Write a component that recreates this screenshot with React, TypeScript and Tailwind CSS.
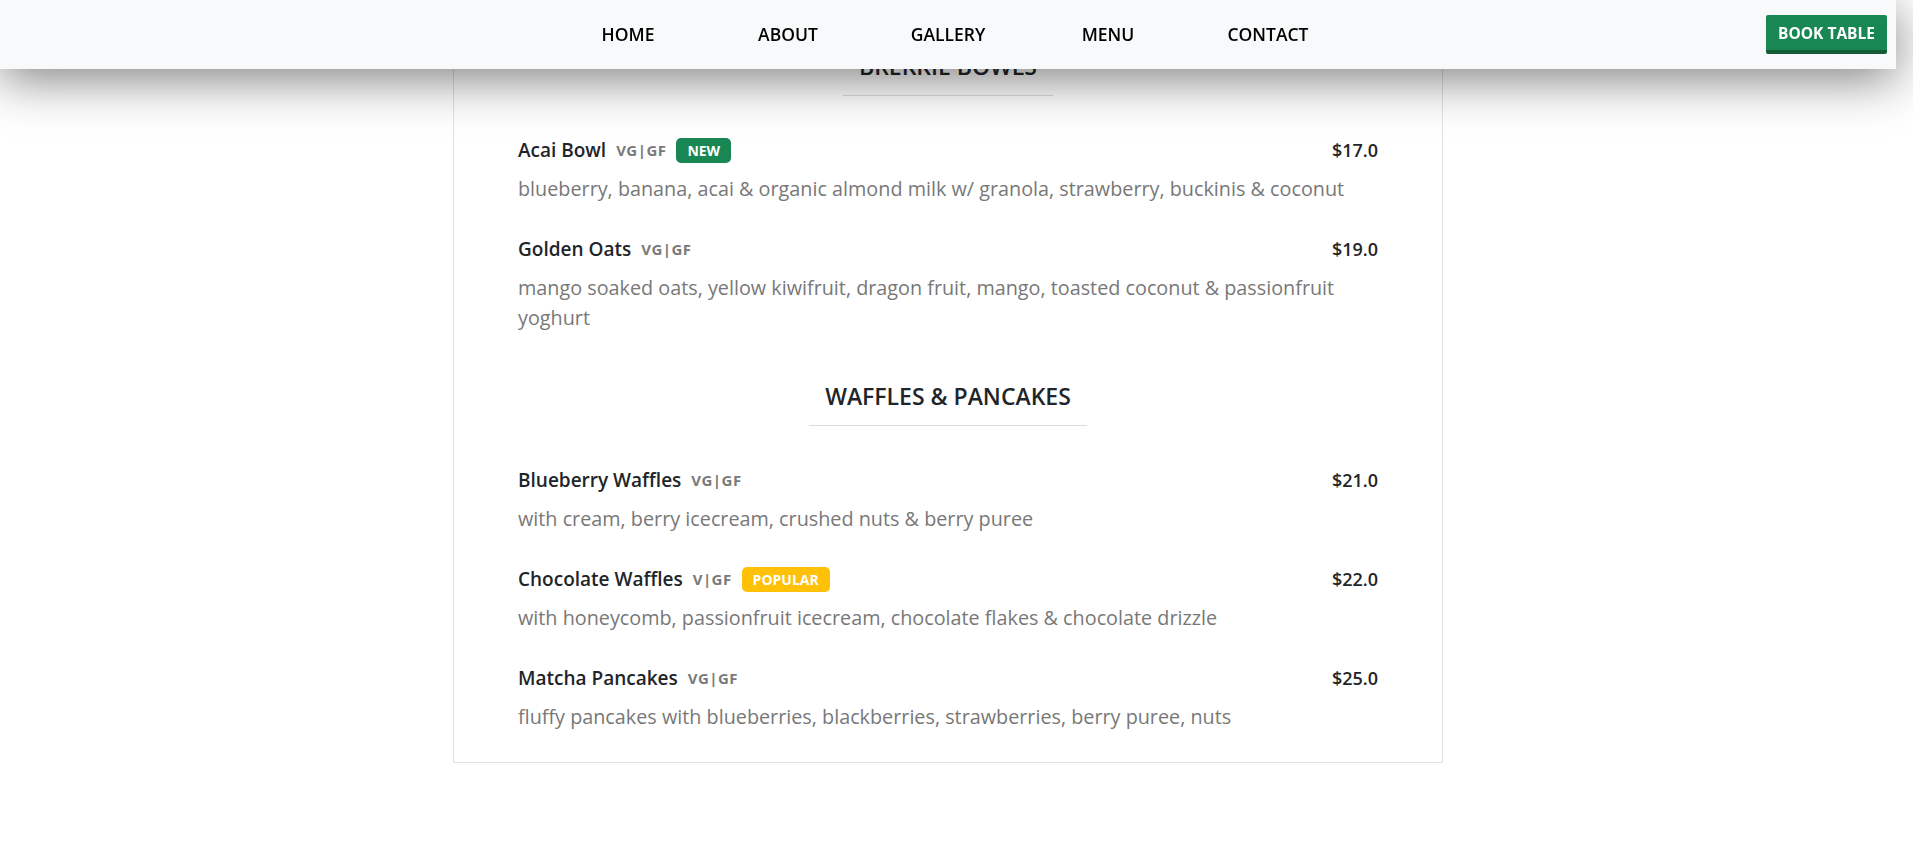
import { useLayoutEffect, useRef } from "react";

type Badge = { label: string; tone: "green" | "yellow" };

interface MenuItem {
  name: string;
  tags: string;
  price: string;
  description: string;
  badge?: Badge;
}

interface MenuSection {
  title: string;
  items: MenuItem[];
}

const NAV_LINKS = ["HOME", "ABOUT", "GALLERY", "MENU", "CONTACT"];

const SECTIONS: MenuSection[] = [
  {
    title: "Brekkie Bowls",
    items: [
      {
        name: "Acai Bowl",
        tags: "VG|GF",
        price: "$17.0",
        badge: { label: "NEW", tone: "green" },
        description:
          "blueberry, banana, acai & organic almond milk w/ granola, strawberry, buckinis & coconut",
      },
      {
        name: "Golden Oats",
        tags: "VG|GF",
        price: "$19.0",
        description:
          "mango soaked oats, yellow kiwifruit, dragon fruit, mango, toasted coconut & passionfruit yoghurt",
      },
    ],
  },
  {
    title: "Waffles & Pancakes",
    items: [
      {
        name: "Blueberry Waffles",
        tags: "VG|GF",
        price: "$21.0",
        description: "with cream, berry icecream, crushed nuts & berry puree",
      },
      {
        name: "Chocolate Waffles",
        tags: "V|GF",
        price: "$22.0",
        badge: { label: "POPULAR", tone: "yellow" },
        description:
          "with honeycomb, passionfruit icecream, chocolate flakes & chocolate drizzle",
      },
      {
        name: "Matcha Pancakes",
        tags: "VG|GF",
        price: "$25.0",
        description:
          "fluffy pancakes with blueberries, blackberries, strawberries, berry puree, nuts",
      },
    ],
  },
];

const ABOVE_HEIGHT = 6205;
const SCROLL_TOP = ABOVE_HEIGHT + 65;

function Navbar() {
  return (
    <header className="sticky top-0 z-20 grid h-[69px] grid-cols-[1fr_auto_1fr] items-center bg-[#f8f9fa] shadow-[0_10px_50px_rgba(0,0,0,0.5)]">
      <div />
      <nav className="flex">
        {NAV_LINKS.map((link) => (
          <a
            key={link}
            href="#"
            className="w-40 text-center text-[17.5px] font-semibold text-black"
          >
            {link}
          </a>
        ))}
      </nav>
      <div className="flex justify-end pr-[9px]">
        <button className="h-[39px] w-[121px] rounded-[2px] border-b-4 border-[#145c36] bg-[#198754] pt-[3px] text-[15.5px] font-bold text-white">
          BOOK TABLE
        </button>
      </div>
    </header>
  );
}

function Tag({ badge }: { badge: Badge }) {
  const tone = badge.tone === "green" ? "bg-[#198754]" : "bg-[#ffc107]";
  return (
    <span
      className={`ml-[10px] h-[25px] rounded-[5px] px-[11px] text-[14px] leading-[25px] font-bold text-white ${tone}`}
    >
      {badge.label}
    </span>
  );
}

function Item({ item }: { item: MenuItem }) {
  return (
    <div>
      <div className="flex h-6 items-center justify-between">
        <div className="flex items-center">
          <span className="text-[19px] font-semibold text-[#212529]">{item.name}</span>
          <span className="ml-[10px] text-[15px] font-bold tracking-[0.03em] text-[#7a7a7a]">
            {item.tags}
          </span>
          {item.badge && <Tag badge={item.badge} />}
        </div>
        <span className="text-[18px] font-semibold text-[#212529]">{item.price}</span>
      </div>
      <p className="mt-3 text-[19.8px] leading-[30px] text-[#787878]">{item.description}</p>
    </div>
  );
}

function Section({ section }: { section: MenuSection }) {
  return (
    <section>
      <div className="text-center">
        <h3 className="inline-block border-b border-[#dcdcdc] px-4 pb-4 text-[23px] leading-[26px] font-semibold text-[#212529] uppercase">
          {section.title}
        </h3>
      </div>
      <div className="mt-[42px] flex flex-col gap-[33px]">
        {section.items.map((item) => (
          <Item key={item.name} item={item} />
        ))}
      </div>
    </section>
  );
}

export default function App() {
  const scrollRef = useRef<HTMLDivElement>(null);

  useLayoutEffect(() => {
    if (scrollRef.current) scrollRef.current.scrollTop = SCROLL_TOP;
  }, []);

  return (
    <div
      ref={scrollRef}
      className="h-screen overflow-y-scroll bg-white font-['Open_Sans','Noto_Sans',sans-serif]"
    >
      {/* keeps the page width that the reference had beside its scrollbar */}
      <div className="mr-[17px]">
        <Navbar />
        <div aria-hidden className="h-[6205px]" />
        <main className="flex justify-center">
          <div className="flex w-[990px] flex-col gap-[50px] border border-[#dee2e6] px-16 pt-12 pb-[30px]">
            {SECTIONS.map((section) => (
              <Section key={section.title} section={section} />
            ))}
          </div>
        </main>
        <div aria-hidden className="h-[2268px]" />
      </div>
    </div>
  );
}
